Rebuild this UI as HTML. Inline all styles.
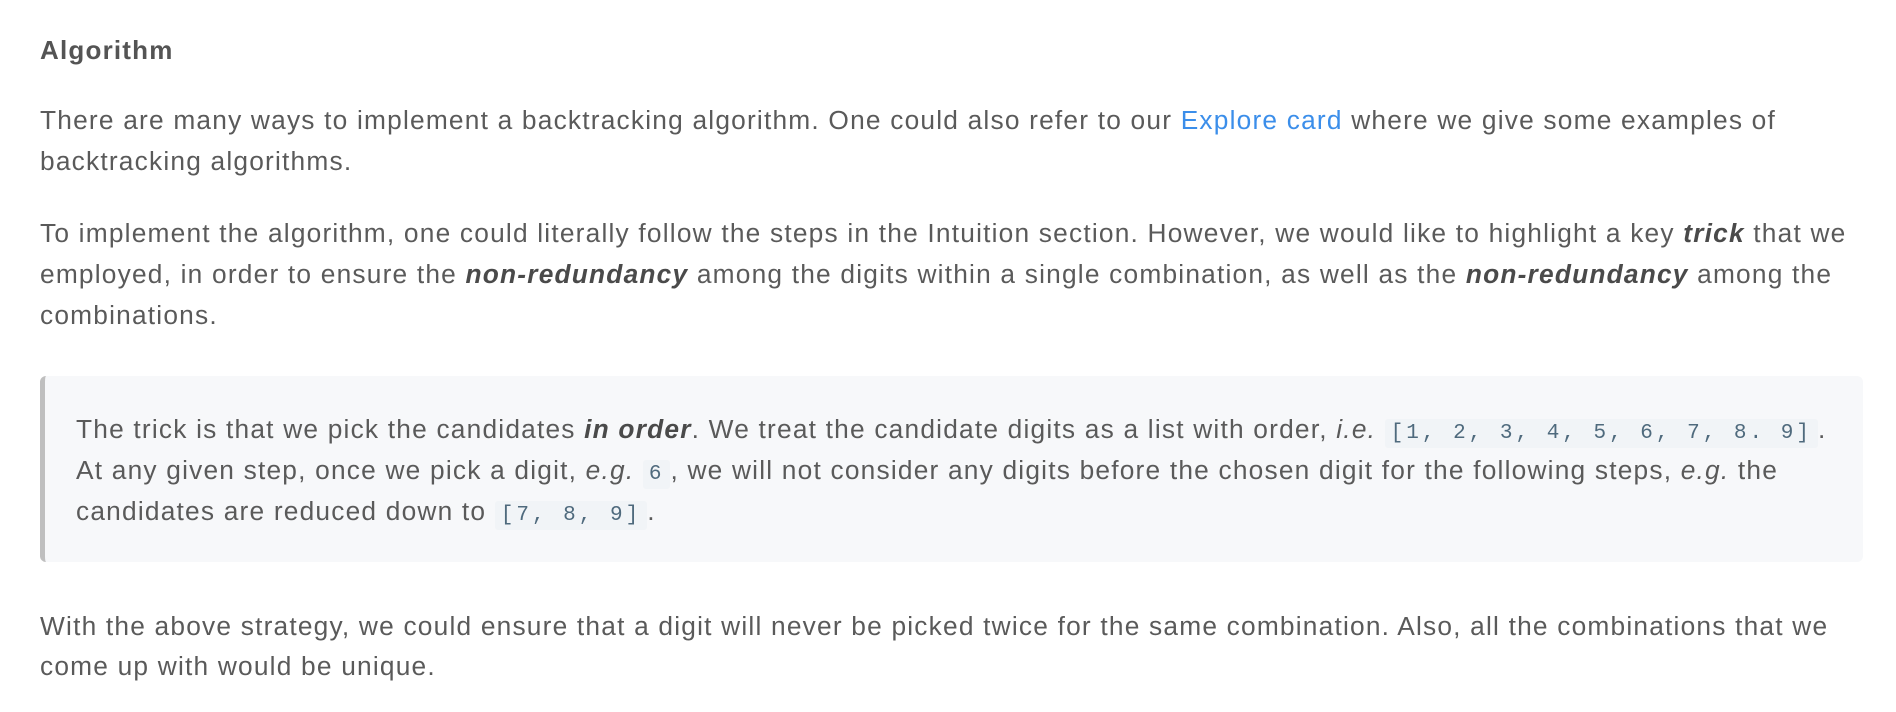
<!DOCTYPE html>
<html><head><meta charset="utf-8"><style>
html,body{margin:0;padding:0;background:#fff;}
body{width:1896px;height:712px;overflow:hidden;position:relative;font-family:"Liberation Sans",sans-serif;color:#5a5a5a;font-size:26.3px;letter-spacing:1.2px;}
.l{position:absolute;left:40px;white-space:nowrap;line-height:41px;}
h3{position:absolute;left:40px;top:30px;margin:0;font-size:26px;line-height:41px;font-weight:bold;color:#545454;letter-spacing:1.2px;}
b{color:#4a4a4a;font-style:italic;}
a{color:#3b8eea;text-decoration:none;}
.bq{position:absolute;left:40px;top:376px;width:1823px;height:186px;background:#f7f8fa;border-radius:6px;border-left:5px solid #bfbfbf;box-sizing:border-box;}
.q{left:76px;}
code{font-family:"Liberation Mono",monospace;font-size:21px;letter-spacing:3px;color:#4f6a7d;background:#f1f4f7;padding:3px 6px;border-radius:3px;}
</style></head><body>
<h3>Algorithm</h3>
<div class="l" style="top:100px">There are many ways to implement a backtracking algorithm. One could also refer to our <a>Explore card</a> where we give some examples of</div>
<div class="l" style="top:141px">backtracking algorithms.</div>
<div class="l" style="top:213px">To implement the algorithm, one could literally follow the steps in the Intuition section. However, we would like to highlight a key <b>trick</b> that we</div>
<div class="l" style="top:254px">employed, in order to ensure the <b>non-redundancy</b> among the digits within a single combination, as well as the <b>non-redundancy</b> among the</div>
<div class="l" style="top:295px">combinations.</div>
<div class="bq"></div>
<div class="l q" style="top:409px">The trick is that we pick the candidates <b>in order</b>. We treat the candidate digits as a list with order, <i>i.e.</i> <code>[1, 2, 3, 4, 5, 6, 7, 8. 9]</code>.</div>
<div class="l q" style="top:450px">At any given step, once we pick a digit, <i>e.g.</i> <code>6</code>, we will not consider any digits before the chosen digit for the following steps, <i>e.g.</i> the</div>
<div class="l q" style="top:491px">candidates are reduced down to <code>[7, 8, 9]</code>.</div>
<div class="l" style="top:606px">With the above strategy, we could ensure that a digit will never be picked twice for the same combination. Also, all the combinations that we</div>
<div class="l" style="top:646px">come up with would be unique.</div>
</body></html>
